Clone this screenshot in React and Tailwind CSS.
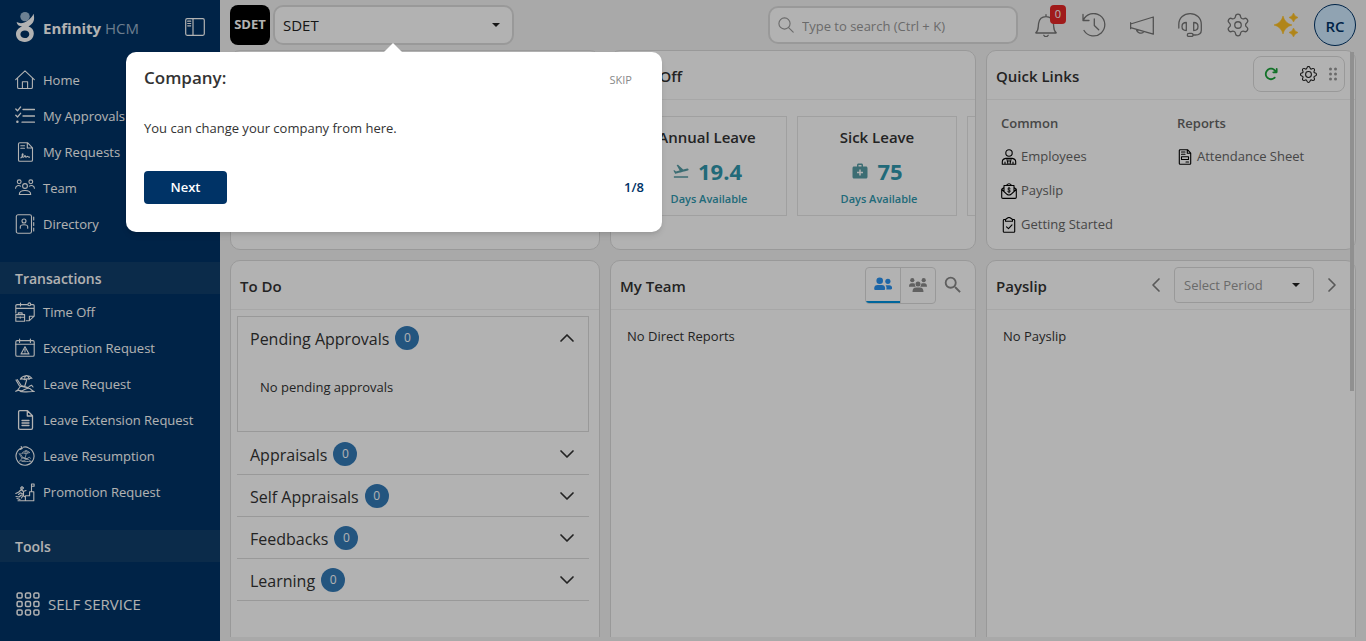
import React from "react";
import { Settings } from "lucide-react";
import { BsGear } from "react-icons/bs";
import { FaArrowRotateRight } from "react-icons/fa6";
import { MdFlightTakeoff, MdMedicalServices, MdSearch } from "react-icons/md";

function Icon({ size = "size-5", box = 20, stroke = 1.1, children }) {
  return (
    <svg
      className={`${size} shrink-0`}
      viewBox={`0 0 ${box} ${box}`}
      fill="none"
      stroke="currentColor"
      strokeWidth={stroke}
      strokeLinecap="round"
      strokeLinejoin="round"
      aria-hidden="true"
    >
      {children}
    </svg>
  );
}

const HomeIcon = () => (
  <Icon>
    <path d="M.7 9.6 10 .9l9.3 8.7M2.6 8v9.2q0 1.3 1.3 1.3h12.2q1.3 0 1.3-1.3V8M7.4 18.4v-6.6h5.2v6.6" />
  </Icon>
);
const ApprovalsIcon = () => (
  <Icon stroke={1.3}>
    <path d="m.8 3 1.7 1.8L5.600 1M.8 9.200l1.700 1.800L5.600 7.300M8 3.500h11.500M8 10h11.500M7 16.200h12.500" />
    <circle cx="2.400" cy="15.800" r=".6" fill="currentColor" />
  </Icon>
);
const RequestsIcon = () => (
  <Icon>
    <path d="M3.500 2q0-1.300 1.300-1.300H12.500L17.500 5.800V18q0 1.300-1.300 1.300H4.800Q3.500 19.300 3.500 18ZM12.300.8V6h5M5.800 3.700h3.700M5.800 6.200h3.700M6 15.800c2-1.500 2.500-4 1.700-4-1 0-.5 3.500.5 3.500s1.300-1.800 1.800-1.800.3 1.800 1 1.800 1-1 1.500-1 .5 1 2 .8" />
  </Icon>
);
const TeamIcon = () => (
  <Icon>
    <circle cx="4.200" cy="3.800" r="1.900" />
    <circle cx="15.800" cy="3.800" r="1.900" />
    <circle cx="10" cy="8" r="2.400" />
    <path d="M.6 10.300c0-2.600 3-3.400 5-2.200M19.400 10.300c0-2.600-3-3.400-5-2.200M4.300 16.500c0-5.300 11.400-5.300 11.400 0Z" />
  </Icon>
);
const DirectoryIcon = () => (
  <Icon>
    <rect x="1.300" y=".8" width="15.200" height="18.400" rx="1.800" />
    <circle cx="9" cy="7" r="2" />
    <path d="M5.300 14.200v-1.400c0-2.700 7.400-2.700 7.400 0v1.400M18.700 3v3M18.700 8.500v3M18.700 14v3" />
  </Icon>
);
const TimeOffIcon = () => (
  <Icon>
    <path d="M.8 11V3.800q0-1.200 1.200-1.200h16q1.200 0 1.200 1.200v10.400l-4.800 4.500h-3.200M14.400 18.500v-4.200h4.600M.8 6.400h18.400M5.500 1v3" />
    <circle cx="14.300" cy="2.300" r="1.400" fill="#003366" />
    <path d="M.8 12.600h8.800v6.600H.8ZM3.300 12.500v-1.600h3.800v1.600M.8 15.300h8.800M5.200 14.800v1.500" />
  </Icon>
);
const ExceptionIcon = () => (
  <Icon>
    <rect x=".8" y="2.600" width="18.400" height="15.600" rx="1.300" />
    <path d="M.8 6.300h18.400M4.600 1v3.500M15.400 1v3.500M10 8.700l4 7.200H6ZM10 11.300v2.200M10 14.700v.1" />
  </Icon>
);
const BeachShape = () => (
  <path d="M5.300 5.200C7.300 1.200 13.500.2 17 4.300c-1.400-.3-2.200 0-3 1-1.300-.8-2.600-.7-4 .5-1.600-1-3-1.200-4.700-.6ZM11 1.500c-1.300 1-1.500 2.500-1.200 4M11 1.500c2 .4 3 2 3 3.500M11.800 5.500 9.500 13M1 6l3.500 6 8 1.800M2.200 5.500l4 6 7.500 2.300M.8 17.300c3-2.300 4.500.3 7-.8s5-3.300 7-2 2.500 3 4.500 3M3 15.500l2.500-3M14 12.500l2.500-1.300L18 13M5 17.500c4 1 9 0 13 0" />
);
const BeachIcon = () => (
  <Icon>
    <BeachShape />
  </Icon>
);
const DocumentIcon = () => (
  <Icon stroke={1.3}>
    <path d="M3.600 2q0-1.300 1.300-1.300h7.600l5 5V18q0 1.300-1.300 1.300H4.900q-1.300 0-1.300-1.300ZM12.300.8V6h5M7 10.500h7M7 13h7M7 15.500h7" />
  </Icon>
);
const ResumptionIcon = () => (
  <Icon>
    <path d="M6.500 1.900A9 9 0 1 0 13 1.700M6.200.6l1 2-2 .8M8 1.200c2.500-.8 4-.3 5.500.7" />
    <g transform="translate(3.600 3.800) scale(.66)">
      <BeachShape />
    </g>
  </Icon>
);
const PromotionIcon = () => (
  <Icon>
    <path d="M3 18.700h15.800v-9h-4.200v4h-4.200v5M16.500 9.500V2h2.600v2.300h-2.500" />
    <path d="M7 4.600 8.500 6 7 7.300 5.600 6ZM.8 11.500l3-1.500 2.500-2.500 2 2 2.700-1M3.500 12.500l2-1.700 3 1.600-2 3.500M1 14.500l3 .5 2.500-2M8.500 10v4l2 1M2 16.500l3 1" />
  </Icon>
);
const GridIcon = () => (
  <Icon size="size-6" box={24} stroke={1.5}>
    {[3.6, 12, 20.4].map((y) =>
      [3.6, 12, 20.4].map((x) => <rect key={`${x}-${y}`} x={x - 2.500} y={y - 2.500} width="5" height="5" rx="1.300" />)
    )}
  </Icon>
);

const BrandLogo = () => (
  <svg className="h-8 w-5 shrink-0" viewBox="0 0 20 32" aria-hidden="true">
    <circle cx="10" cy="5.600" r="4.700" fill="#9cb9d3" />
    <path
      d="M18.600 2.800C20 9 18.700 12.600 13.500 15.400c3.300.9 5.300 3.300 5.300 6.800 0 5.100-3.900 8.700-9 8.700-5.300 0-8.800-3.300-8.800-7.700 0-3.700 2.600-6.300 6-7.900C4 15.200 1.900 13.800 1.600 11c3.600 2 7.600 1.200 10.900-1.200 2.900-2.100 4.900-4.200 6.100-7ZM5.400 23.300c0 2.300 1.900 3.800 4.400 3.800s4.500-1.500 4.500-3.900c0-2.200-1.900-3.700-4.400-3.700s-4.500 1.600-4.500 3.800Z"
      fill="#fff"
      fillRule="evenodd"
    />
  </svg>
);

const PanelIcon = () => (
  <Icon size="size-5" stroke={1.2}>
    <rect x=".7" y="1.700" width="18.600" height="16.600" rx="1.500" />
    <path d="M8 1.700v16.600M2.700 4.200h3M2.700 6.500h3M2.700 8.800h3" />
  </Icon>
);

const BellIcon = () => (
  <Icon size="size-6" box={24} stroke={1.300}>
    <path d="M2 19.400c2.800-2.300 2-5 2.600-9 .7-4.400 3.700-6.700 7.400-6.700s6.700 2.300 7.400 6.700c.6 4-.2 6.700 2.600 9Q22.600 20 21.800 20H2.200Q1.400 20 2 19.400ZM12 3.500V1.600M9.800 22.300c1 1.900 3.400 1.900 4.400 0" />
  </Icon>
);
const HistoryIcon = () => (
  <Icon size="size-6" box={24} stroke={1.300}>
    <path d="M1 1.500v6h6M1.300 7.300A11.200 11.200 0 1 1 2 17.500M12.300 6v6.500l4.400 4.300" />
  </Icon>
);
const MegaphoneIcon = () => (
  <Icon size="size-6" box={24} stroke={1.300}>
    <path d="M.6 9.700v6M.6 11 23.300 4v17.200L.6 14.600M6.500 16.500c.3 3.700 6 5 7.300 2" />
  </Icon>
);
const HeadsetIcon = () => (
  <Icon size="size-6" box={24} stroke={1.300}>
    <path d="M.8 15v-3.500C.8 4.700 6 .7 12.100.7s11.200 4 11.200 10.800v5.700c0 3.500-2.500 4.800-6 4.800H15" />
    <path d="M8.300 9.500v8c-2.800 0-4.300-1.300-4.300-4s1.500-4 4.300-4ZM15.700 9.500v8c2.800 0 4.300-1.300 4.300-4s-1.500-4-4.300-4Z" />
    <rect x="9.300" y="20.300" width="5.800" height="3.200" rx="1.600" />
  </Icon>
);
const SparklesIcon = () => (
  <svg className="size-6" viewBox="0 0 24 24" fill="#fdbf24" aria-hidden="true">
    <path d="M9 3q1.800 7.200 9 9-7.200 1.800-9 9-1.800-7.200-9-9 7.200-1.800 9-9ZM19.500 0q1 3.500 4.500 4.500-3.500 1-4.500 4.500-1-3.500-4.500-4.500 3.500-1 4.500-4.500ZM19.500 15q1 3.500 4.500 4.500-3.500 1-4.500 4.500-1-3.500-4.500-4.500 3.500-1 4.500-4.500Z" stroke="#fdbf24" strokeWidth=".6" strokeLinejoin="round" />
  </svg>
);

const EmployeeIcon = () => (
  <Icon size="size-4" box={16} stroke={1.100}>
    <circle cx="8" cy="4" r="3.200" />
    <path d="M1.300 15.300v-2.500c0-2 1.300-3 3.500-3.400h6.400c2.200.4 3.500 1.400 3.500 3.400v2.500ZM5.800 9.500 7 15M10.200 9.500 9 15M8 10.500v2M4 13v2M12 13v2" />
  </Icon>
);
const PayslipIcon = () => (
  <Icon size="size-4" box={16} stroke={1.100}>
    <path d="M3 8.500V2.500h10v6M5.500 2.300Q8-.8 10.500 2.300M2.700 4.700.7 6.200v8q0 1.200 1.200 1.200h12.200q1.200 0 1.200-1.200v-8l-2-1.500M.8 6.500 6 11.300q2 1.500 4 0l5.200-4.800" />
    <path d="M9.300 5.500C8.800 4.800 6.800 4.800 6.800 6S9.400 6.900 9.400 8.100 7.200 9.200 6.600 8.500M8 4.300v5.500" strokeWidth=".9" />
  </Icon>
);
const ClipboardIcon = () => (
  <Icon size="size-4" box={16} stroke={1.100}>
    <path d="M4.500 2.500H3.200q-.9 0-.9.900v11q0 .9.900.9h9.600q.9 0 .9-.9v-11q0-.9-.9-.9h-1.300M4.500 4.300V2.500L6.500 1q1.500-1 3 0l2 1.500v1.800ZM5.500 9.800l2 1.800 3.500-3.800" />
  </Icon>
);
const SheetIcon = () => (
  <Icon size="size-4" box={16} stroke={1.100}>
    <path d="M2.300 1.500q0-.8.800-.8H10.500l3.200 3.500v10.300q0 .8-.8.800H3.100q-.8 0-.8-.8ZM10.300.8v3.500h3.300M4.500 3h3.500M4.500 5.300h3.500M4.500 7.800h7v2.700h-7ZM9 13h2.500" />
  </Icon>
);

const DragDots = () => (
  <svg className="h-[14px] w-2" viewBox="0 0 8 14" fill="currentColor" aria-hidden="true">
    {[1.5, 6.5].map((x) => [2, 7, 12].map((y) => <circle key={`${x}-${y}`} cx={x} cy={y} r="1.500" />))}
  </svg>
);

const PeopleIcon = () => (
  <svg className="h-4 w-5" viewBox="0 0 20 16" fill="#2a93f0" aria-hidden="true">
    <circle cx="6.700" cy="4.700" r="3.300" />
    <circle cx="14.900" cy="5.300" r="2.600" />
    <path d="M1.200 12.500c0-2.500 1.300-3.600 3.500-3.600h4c2.200 0 3.400 1.100 3.400 3.600 0 1-.5 1.500-1.400 1.500H2.600c-.9 0-1.400-.5-1.400-1.500ZM12.600 9.200h3.600c1.900 0 2.900 1 2.900 2.900 0 .9-.4 1.400-1.300 1.400h-4.500c.5-1.800.2-3.200-.7-4.300Z" />
  </svg>
);
const GroupIcon = () => (
  <svg className="h-4 w-5" viewBox="0 0 20 16" fill="#8b8b8b" aria-hidden="true">
    <circle cx="4.300" cy="3.200" r="2.100" />
    <circle cx="15.700" cy="3.200" r="2.100" />
    <circle cx="10" cy="6.900" r="2.500" />
    <path d="M1 9.800c0-2.500 1-3.500 2.600-3.500h1.800c.7 0 1.200.2 1.500.5-.2 1.200.1 2.200.9 3ZM19 9.800c0-2.500-1-3.500-2.600-3.500h-1.800c-.7 0-1.200.2-1.500.5.2 1.200-.1 2.200-.9 3ZM4.500 15c0-3.300 1.300-4.600 3.500-4.600h4c2.200 0 3.500 1.300 3.500 4.600Z" />
  </svg>
);

const Caret = () => (
  <svg className="pointer-events-none col-start-1 row-start-1 mr-[14px] h-1 w-2 justify-self-end" viewBox="0 0 8 4" aria-hidden="true">
    <path d="M0 0h8L4 4Z" fill="#222" />
  </svg>
);

const Chevron = ({ d }) => (
  <Icon size="size-4" box={16} stroke={1.700}>
    <path d={d} />
  </Icon>
);
const UP = "M2 11 8 5l6 6";
const DOWN = "M2 5l6 6 6-6";
const LEFT = "M11 2 5 8l6 6";
const RIGHT = "M5 2l6 6-6 6";

const mainNav = [
  ["Home", HomeIcon],
  ["My Approvals", ApprovalsIcon],
  ["My Requests", RequestsIcon],
  ["Team", TeamIcon],
  ["Directory", DirectoryIcon],
];
const transactionNav = [
  ["Time Off", TimeOffIcon],
  ["Exception Request", ExceptionIcon],
  ["Leave Request", BeachIcon],
  ["Leave Extension Request", DocumentIcon],
  ["Leave Resumption", ResumptionIcon],
  ["Promotion Request", PromotionIcon],
];

function NavList({ items }) {
  return (
    <ul>
      {items.map(([label, Glyph]) => (
        <li key={label}>
          <a href="#" className="flex h-9 items-center gap-2 pl-[15px] text-[13px] text-white">
            <Glyph />
            <span className="pt-0.5">{label}</span>
          </a>
        </li>
      ))}
    </ul>
  );
}

function Sidebar() {
  return (
    <aside className="flex w-[220px] shrink-0 flex-col overflow-hidden bg-[#003366] text-white">
      <div className="flex h-[54px] items-center pr-[15px] pl-[15px]">
        <BrandLogo />
        <span className="ml-2 flex-1 pt-0.5 text-[15px] font-bold">
          Enfinity <span className="font-normal text-[#9cb4cc]">HCM</span>
        </span>
        <button type="button" aria-label="Toggle sidebar">
          <PanelIcon />
        </button>
      </div>
      <nav className="mt-2">
        <NavList items={mainNav} />
        <h2 className="mt-5 flex h-8 items-center bg-[#103e6b] pt-0.5 pl-[15px] text-sm font-semibold">Transactions</h2>
        <NavList items={transactionNav} />
        <h2 className="mt-5 flex h-8 items-center bg-[#103e6b] pt-0.5 pl-[15px] text-sm font-semibold">Tools</h2>
      </nav>
      <a href="#" className="mt-6 flex h-9 items-center gap-2 pl-4 text-[15px]">
        <GridIcon />
        SELF SERVICE
      </a>
    </aside>
  );
}

function TopBar() {
  return (
    <header className="flex h-[50px] shrink-0 items-center pr-[10px] pl-[10px]">
      <div className="flex size-10 items-center justify-center rounded-lg bg-black text-[13px] font-bold text-white">SDET</div>
      <label className="ml-[3px] grid w-[241px] items-center">
        <span className="sr-only">Company</span>
        <select className="col-start-1 row-start-1 h-10 appearance-none rounded-[10px] border-2 border-[#dcdcdc] bg-white pl-2 text-[15px] leading-6 text-[#222]">
          <option>SDET</option>
        </select>
        <Caret />
      </label>
      <label className="ml-auto flex h-[38px] w-[250px] items-center gap-2 rounded-[10px] border-2 border-[#dcdcdc] bg-white pl-2 text-[#999]">
        <span className="sr-only">Search</span>
        <Icon size="size-4" box={16} stroke={1.100}>
          <circle cx="6.500" cy="6.500" r="5.600" />
          <path d="m10.600 10.600 4.600 4.600" />
        </Icon>
        <input className="h-full min-w-0 flex-1 pt-0.5 text-[13px] placeholder:text-[#999]" placeholder="Type to search (Ctrl + K)" />
      </label>
      <div className="ml-1 flex items-center text-[#757575]">
        <button type="button" aria-label="Notifications" className="relative flex w-12 justify-center">
          <BellIcon />
          <span className="absolute -top-2 right-1 flex h-[19px] w-4 items-center justify-center rounded bg-[#e52828] text-[11px] text-white">0</span>
        </button>
        <button type="button" aria-label="History" className="flex w-12 justify-center"><HistoryIcon /></button>
        <button type="button" aria-label="Announcements" className="flex w-12 justify-center"><MegaphoneIcon /></button>
        <button type="button" aria-label="Support" className="flex w-12 justify-center"><HeadsetIcon /></button>
        <button type="button" aria-label="Settings" className="flex w-12 justify-center"><Settings className="size-[26px]" strokeWidth={1.2} /></button>
        <button type="button" aria-label="Assistant" className="flex w-12 justify-center"><SparklesIcon /></button>
      </div>
      <button type="button" className="ml-1 flex size-[42px] items-center justify-center rounded-full border border-[#003366] bg-[#cfeaff] pt-0.5 text-[15px] font-semibold text-[#003366]">
        RC
      </button>
    </header>
  );
}

function Card({ title, actions, children }) {
  return (
    <section className="flex min-w-0 flex-col overflow-hidden rounded-[10px] border border-[#dcdcdc] bg-white">
      <div className="flex h-[49px] shrink-0 items-center justify-between border-b border-[#f0f0f0] pl-[9px]">
        <h2 className="pt-0.5 text-[15px] font-semibold text-[#333]">{title}</h2>
        {actions}
      </div>
      {children}
    </section>
  );
}

function LeaveTile({ name, days, icon: Glyph }) {
  return (
    <div className="flex h-[100px] w-40 shrink-0 flex-col items-center border border-[#e6e6e6] pt-2">
      <h3 className="text-[15px] leading-6 font-semibold text-[#333]">{name}</h3>
      <p className="mt-2 flex items-center gap-2 text-[22px] leading-7 font-bold text-[#3098ae]">
        <Glyph className="size-[18px] text-[#579ca5]" />
        {days}
      </p>
      <p className="mt-1 ml-1 text-[11px] leading-5 font-semibold text-[#3098ae]">Days Available</p>
    </div>
  );
}

function QuickLink({ icon: Glyph, label }) {
  return (
    <li>
      <a href="#" className="flex h-[34px] items-center gap-1 text-[13px] text-[#666]">
        <span className="text-black"><Glyph /></span>
        {label}
      </a>
    </li>
  );
}

function Count() {
  return <span className="ml-[6px] flex size-6 items-center justify-center rounded-full bg-[#337ab7] text-xs text-white">0</span>;
}

function TodoCard() {
  return (
    <Card title="To Do">
      <div className="mt-[6px] mr-[10px] ml-[6px] text-[#333]">
        <div className="h-[116px] border border-[#dcdcdc]">
          <button type="button" aria-expanded="true" className="flex h-[42px] w-full items-center pr-[13px] pl-3 text-base">
            <span className="pt-0.5">Pending Approvals</span>
            <Count />
            <span className="ml-auto"><Chevron d={UP} /></span>
          </button>
          <p className="mt-[18px] ml-[22px] text-[13px] leading-5">No pending approvals</p>
        </div>
        <div className="pt-px">
          {["Appraisals", "Self Appraisals", "Feedbacks", "Learning"].map((label) => (
            <button key={label} type="button" aria-expanded="false" className="flex h-[42px] w-full items-center border-b border-[#dcdcdc] pr-[14px] pl-[13px] text-base">
              <span className="pt-0.5">{label}</span>
              <Count />
              <span className="ml-auto"><Chevron d={DOWN} /></span>
            </button>
          ))}
        </div>
      </div>
    </Card>
  );
}

function Dashboard() {
  return (
    <main className="relative mb-1 min-h-0 flex-1 overflow-hidden px-[10px]">
      <div className="grid grid-cols-[370fr_366fr_370fr] grid-rows-[200px_420px] gap-[10px]">
        <Card />
        <Card title="Time Off">
          <div className="flex gap-[10px] overflow-hidden pt-4 pl-4">
            <LeaveTile name="Annual Leave" days="19.4" icon={MdFlightTakeoff} />
            <LeaveTile name="Sick Leave" days="75" icon={MdMedicalServices} />
            <div className="h-[100px] w-40 shrink-0 border border-[#e6e6e6]" />
          </div>
        </Card>
        <Card
          title="Quick Links"
          actions={
            <div className="mr-[10px] mb-0.5 flex h-9 w-[92px] items-center justify-between rounded-lg border border-[#dcdcdc] pr-[7px] pl-[10px]">
              <button type="button" aria-label="Refresh" className="text-[#1aa33a]"><FaArrowRotateRight className="size-[14px]" /></button>
              <span className="flex items-center gap-3">
                <button type="button" aria-label="Widget settings" className="text-[#222]"><BsGear className="size-[17px]" /></button>
                <button type="button" aria-label="Move widget" className="text-[#999]"><DragDots /></button>
              </span>
            </div>
          }
        >
          <div className="grid grid-cols-2 pt-[11px] pr-0.5 pl-[14px]">
            <div>
              <h3 className="text-[13px] leading-6 font-semibold text-[#666]">Common</h3>
              <ul className="mt-[5px]">
                <QuickLink icon={EmployeeIcon} label="Employees" />
                <QuickLink icon={PayslipIcon} label="Payslip" />
                <QuickLink icon={ClipboardIcon} label="Getting Started" />
              </ul>
            </div>
            <div>
              <h3 className="text-[13px] leading-6 font-semibold text-[#666]">Reports</h3>
              <ul className="mt-[5px]">
                <QuickLink icon={SheetIcon} label="Attendance Sheet" />
              </ul>
            </div>
          </div>
        </Card>

        <TodoCard />
        <Card
          title="My Team"
          actions={
            <div className="flex items-center pr-[11px]">
              <div className="flex h-[37px] w-[71px] overflow-hidden rounded border border-[#dcdcdc]">
                <button type="button" aria-label="Direct reports" className="flex flex-1 items-center justify-center border-b-2 border-[#0092e0]"><PeopleIcon /></button>
                <button type="button" aria-label="Whole team" className="flex flex-1 items-center justify-center border-l border-[#dcdcdc]"><GroupIcon /></button>
              </div>
              <button type="button" aria-label="Search team" className="ml-[6px] text-[#888]"><MdSearch className="size-[22px]" /></button>
            </div>
          }
        >
          <p className="px-4 pt-4 text-[13px] leading-5 text-[#333]">No Direct Reports</p>
        </Card>
        <Card
          title="Payslip"
          actions={
            <div className="flex items-center gap-[10px] pr-[15px] text-[#808080]">
              <button type="button" aria-label="Previous period"><Chevron d={LEFT} /></button>
              <label className="grid w-[140px] items-center">
                <span className="sr-only">Period</span>
                <select className="col-start-1 row-start-1 h-9 appearance-none rounded border border-[#dcdcdc] bg-white pl-[9px] text-[13px] leading-5 text-[#999]">
                  <option>Select Period</option>
                </select>
                <Caret />
              </label>
              <button type="button" aria-label="Next period"><Chevron d={RIGHT} /></button>
            </div>
          }
        >
          <p className="px-4 pt-4 text-[13px] leading-5 text-[#333]">No Payslip</p>
        </Card>
      </div>
      <div className="absolute top-[2px] right-3 h-[339px] w-1 bg-[#cfcfcf]" />
    </main>
  );
}

function TourStep() {
  return (
    <div role="dialog" aria-labelledby="tour-title" className="absolute top-[52px] left-[126px] z-20 w-[536px] rounded-[10px] bg-white px-[18px] pt-[14px] pb-7 text-[#333] shadow-md">
      <svg className="absolute -top-[9px] left-[258px] h-[9px] w-[18px]" viewBox="0 0 18 9" aria-hidden="true">
        <path d="M0 9 9 0l9 9Z" fill="#fff" />
      </svg>
      <div className="flex items-center justify-between">
        <h2 id="tour-title" className="text-[17px] leading-6 font-semibold">Company:</h2>
        <button type="button" className="mr-3 pt-1 text-[11px] text-[#888]">SKIP</button>
      </div>
      <p className="mt-7 text-[13px] leading-5">You can change your company from here.</p>
      <div className="mt-[33px] flex items-center justify-between">
        <button type="button" className="h-[33px] w-[83px] rounded bg-[#003366] text-[13px] font-semibold text-white">Next</button>
        <span className="text-[13px] font-semibold text-[#003366]">1/8</span>
      </div>
    </div>
  );
}

export default function App() {
  return (
    <div className="relative flex h-screen overflow-hidden bg-[#f3f3f3] font-['Open_Sans','Noto_Sans',sans-serif]">
      <Sidebar />
      <div className="flex min-w-0 flex-1 flex-col">
        <TopBar />
        <Dashboard />
      </div>
      <div className="absolute inset-0 z-10 bg-black/30" />
      <TourStep />
    </div>
  );
}
